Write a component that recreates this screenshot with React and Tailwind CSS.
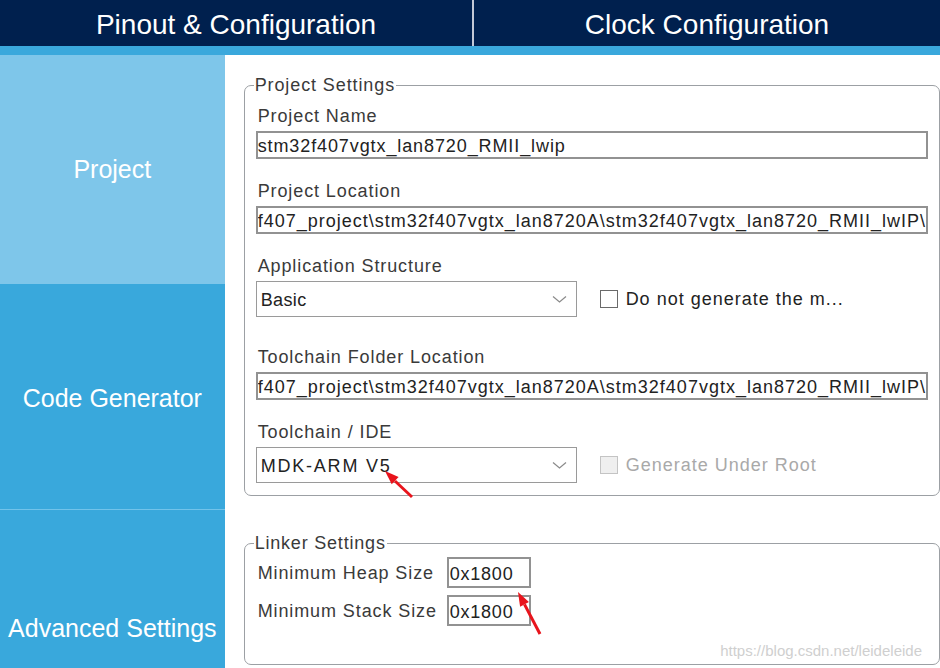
import React from "react";

const Label = ({ children, className = "" }) => (
  <div className={`text-[18px] leading-[20px] text-[#3a3a3a] pl-[2px] tracking-[0.9px] ${className}`}>
    {children}
  </div>
);

const TextField = ({ value, className = "" }) => (
  <div
    className={`h-[28px] border-2 border-[#929292] bg-white flex items-center pt-[3px] overflow-hidden whitespace-nowrap text-[18px] text-[#222] ${className}`}
  >
    {value}
  </div>
);

const Chevron = () => (
  <svg width="15" height="9" viewBox="0 0 15 9" className="mr-[9px]">
    <polyline points="1,1.5 7.5,7 14,1.5" fill="none" stroke="#8a8a8a" strokeWidth="1.2" />
  </svg>
);

const Select = ({ value, spacing = "tracking-[0.4px]" }) => (
  <div className="w-[321px] h-[36px] border border-[#9a9a9a] bg-white flex items-center justify-between pl-[4px] text-[18px] text-[#222]">
    <span className={`pt-[3px] ${spacing}`}>{value}</span>
    <Chevron />
  </div>
);

const Checkbox = ({ label, disabled }) => (
  <div className="flex items-center ml-[23px]">
    <div
      className={`w-[18px] h-[18px] border ${
        disabled ? "border-[#c4c4c4] bg-[#efefef]" : "border-[#6a6a6a] bg-white"
      }`}
    ></div>
    <span className={`ml-[8px] text-[18px] tracking-[1px] ${disabled ? "text-[#a9a9a9]" : "text-[#222]"}`}>
      {label}
    </span>
  </div>
);

const App = () => {
  const location = "f407_project\\stm32f407vgtx_lan8720A\\stm32f407vgtx_lan8720_RMII_lwIP\\";

  return (
    <div className="relative w-[940px] h-[668px] overflow-hidden flex flex-col bg-white font-['Liberation_Sans',Arial,sans-serif]">
      {/* Top tabs */}
      <div className="h-[46px] bg-[#00204e] flex text-white text-[28px] tracking-[0px]">
        <div className="w-[472px] flex items-center justify-center pt-[4px]">Pinout &amp; Configuration</div>
        <div className="w-[2px] bg-[#c3c9d6]"></div>
        <div className="flex-1 flex items-center justify-center pt-[4px]">Clock Configuration</div>
      </div>
      <div className="h-[9px] bg-[#3aa8dc]"></div>

      <div className="flex flex-1">
        {/* Sidebar */}
        <div className="w-[225px] flex flex-col text-white text-[25px]">
          <div className="h-[229px] bg-[#7ec6ea] flex items-center justify-center">Project</div>
          <div className="h-[226px] bg-[#39a8dc] border-b border-[#72c3ea] flex items-center justify-center pt-[4px]">
            Code Generator
          </div>
          <div className="flex-1 bg-[#39a8dc] pt-[104px] text-center leading-[28px]">Advanced Settings</div>
        </div>

        {/* Content */}
        <div className="flex-1 pl-[19px] pt-[20px]">
          <fieldset className="border border-[#9ca0a4] rounded-[7px] px-[11px] pb-[12px]">
            <legend className="px-[1px] -ml-[2px] text-[18px] leading-[20px] text-[#3a3a3a] tracking-[0.9px]">
              Project Settings
            </legend>
            <Label className="mt-[11px]">Project Name</Label>
            <TextField className="mt-[5px] tracking-[0.9px]" value="stm32f407vgtx_lan8720_RMII_lwip" />

            <Label className="mt-[22px]">Project Location</Label>
            <TextField className="mt-[5px] tracking-[1px]" value={location} />

            <Label className="mt-[22px]">Application Structure</Label>
            <div className="mt-[5px] flex items-center">
              <Select value="Basic" />
              <Checkbox label="Do not generate the m..." />
            </div>

            <Label className="mt-[30px]">Toolchain Folder Location</Label>
            <TextField className="mt-[5px] tracking-[1px]" value={location} />

            <Label className="mt-[22px]">Toolchain / IDE</Label>
            <div className="mt-[5px] flex items-center">
              <Select value="MDK-ARM V5" spacing="tracking-[1.8px]" />
              <Checkbox label="Generate Under Root" disabled />
            </div>
          </fieldset>

          <fieldset className="mt-[37px] border border-[#9ca0a4] rounded-[7px] px-[11px] pb-[4px]">
            <legend className="px-[1px] -ml-[2px] text-[18px] leading-[20px] text-[#3a3a3a] tracking-[0.8px]">
              Linker Settings
            </legend>
            <div className="mt-[4px] flex items-center">
              <Label className="w-[191px]">Minimum Heap Size</Label>
              <TextField className="w-[84px] h-[31px] pl-[1px] tracking-[0.8px]" value="0x1800" />
            </div>
            <div className="mt-[7px] flex items-center">
              <Label className="w-[191px]">Minimum Stack Size</Label>
              <TextField className="w-[84px] h-[31px] pl-[1px] tracking-[0.8px]" value="0x1800" />
            </div>
            <div className="mt-[16px] text-right pr-[6px] text-[15px] leading-[18px] text-[#cfcfcf]">
              https://blog.csdn.net/leideleide
            </div>
          </fieldset>
        </div>
      </div>

      {/* Annotation arrows */}
      <svg className="absolute inset-0 pointer-events-none" width="940" height="668">
        <line x1="412" y1="497" x2="395" y2="481" stroke="#e8141c" strokeWidth="3" />
        <polygon points="385,471 398.6,477.1 391.7,484.3" fill="#e8141c" />
        <line x1="540" y1="634" x2="524.5" y2="604.4" stroke="#e8141c" strokeWidth="3" />
        <polygon points="518,592 528.9,602.1 520.1,606.7" fill="#e8141c" />
      </svg>
    </div>
  );
};

export default App;
